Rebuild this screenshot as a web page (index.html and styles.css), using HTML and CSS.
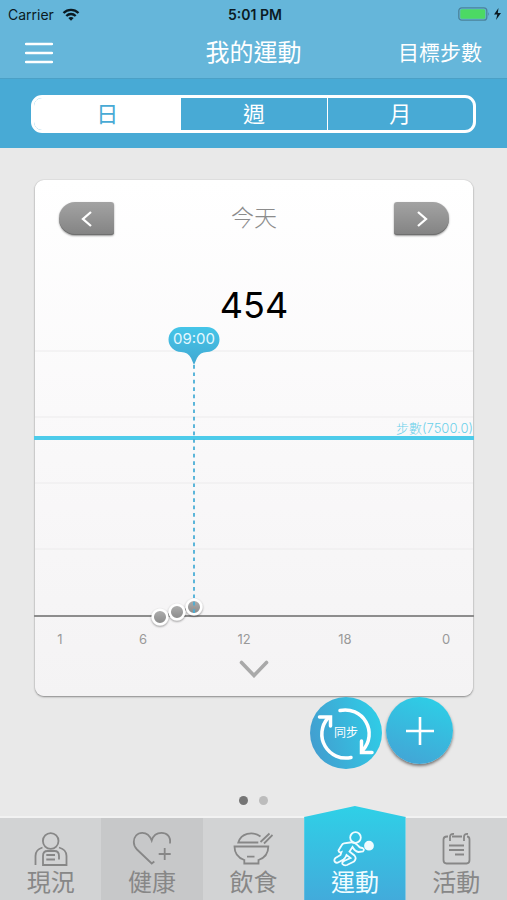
FILE: index.html
```html
<!DOCTYPE html>
<html lang="zh-Hant">
<head>
<meta charset="utf-8">
<meta name="viewport" content="width=device-width, initial-scale=1">
<title>我的運動</title>
<link rel="stylesheet" href="styles.css">
</head>
<body>
<div class="app">
  <header class="header">
    <div class="status">
      <div class="status-left">
        <span>Carrier</span>
        <svg class="wifi" viewBox="0 0 18 13" aria-hidden="true">
          <path d="M1.500 5C5.800 .8 12.200 .8 16.500 5M4.300 8C7 5.300 11 5.300 13.700 8" fill="none" stroke="#0b1a22" stroke-width="2.300"/>
          <path d="M6.300 10 9 12.800 11.700 10Q9 8 6.300 10Z" fill="#0b1a22"/>
        </svg>
      </div>
      <strong class="clock">5:01 PM</strong>
      <div class="status-right">
        <svg class="battery" viewBox="0 0 44 14" aria-hidden="true">
          <rect x=".8" y=".8" width="28" height="12.400" rx="3" fill="none" stroke="#4b839b" stroke-width="1.300"/>
          <rect x="2.300" y="2.300" width="25" height="9.400" rx="1.500" fill="#4cd964"/>
          <path d="M30.300 5Q32 7 30.300 9Z" fill="#4b839b"/>
          <path d="M40.500 1 36 7.600H39.300L38 13 43 6H39.800Z" fill="#0b1a22"/>
        </svg>
      </div>
    </div>
    <nav class="navbar">
      <button class="menu" type="button" aria-label="選單">
        <svg viewBox="0 0 28 22" aria-hidden="true"><path d="M1 2H27M1 11H27M1 20H27" stroke="#fff" stroke-width="2.400" stroke-linecap="round"/></svg>
      </button>
      <h1 class="title">我的運動</h1>
      <a class="goal-link" href="#goal">目標步數</a>
    </nav>
  </header>
  <div class="range-bar">
    <div class="range">
      <button class="range-item is-on" type="button" aria-pressed="true">日</button>
      <button class="range-item" type="button" aria-pressed="false">週</button>
      <button class="range-item" type="button" aria-pressed="false">月</button>
    </div>
  </div>

  <main class="main">
    <section class="card">
      <div class="card-head">
        <button class="step step-prev" type="button" aria-label="前一天"><svg viewBox="0 0 12 18" aria-hidden="true"><path d="M10 2 2 9 10 16"/></svg></button>
        <h2 class="day">今天</h2>
        <button class="step step-next" type="button" aria-label="後一天"><svg viewBox="0 0 12 18" aria-hidden="true"><path d="M2 2 10 9 2 16"/></svg></button>
      </div>
      <p class="count">454</p>
      <svg class="chart" viewBox="0 0 438 323" role="img" aria-label="每小時步數">
        <defs>
          <linearGradient id="pin" x1="0" y1="0" x2="0" y2="1"><stop offset="0" stop-color="#45c5e8"/><stop offset="1" stop-color="#42a8d2"/></linearGradient>
          <linearGradient id="dot" x1="0" y1="0" x2="0" y2="1"><stop offset="0" stop-color="#b0b0b0"/><stop offset="1" stop-color="#888"/></linearGradient>
          <filter id="soft" x="-50%" y="-50%" width="200%" height="200%"><feDropShadow dx="0" dy="1" stdDeviation="1" flood-opacity=".45"/></filter>
        </defs>
        <path d="M0 24H438M0 90H438M0 156H438M0 222H438" stroke="#ecebec" stroke-width="1"/>
        <path d="M-1 289H439" stroke="#8d8d8d" stroke-width="2"/>
        <path d="M-1 111H439" stroke="#4dcbea" stroke-width="4"/>
        <text class="goal-text" x="438" y="106" text-anchor="end">步數(7500.0)</text>
        <path d="M125 290 142 285 159 280" fill="none" stroke="#777" stroke-width="2"/>
        <g fill="url(#dot)" stroke="#fff" stroke-width="2.500" filter="url(#soft)">
          <circle cx="125" cy="290" r="7.300"/><circle cx="142" cy="285" r="7.300"/><circle cx="159" cy="280" r="7.300"/>
        </g>
        <path d="M159 38V289" stroke="#4aaed6" stroke-width="1.800" stroke-dasharray="3.700 3.700"/>
        <path d="M146 0H172A12.500 12.500 0 0 1 172 25Q165 25 162 31L159 38 156 31Q153 25 146 25A12.500 12.500 0 0 1 146 0Z" fill="url(#pin)"/>
        <text class="pin-text" x="159" y="17" text-anchor="middle">09:00</text>
        <g class="axis-text" text-anchor="middle">
          <text x="25" y="317">1</text><text x="108" y="317">6</text><text x="209" y="317">12</text><text x="310" y="317">18</text><text x="411" y="317">0</text>
        </g>
      </svg>
      <button class="expand" type="button" aria-label="展開">
        <svg viewBox="0 0 30 18" aria-hidden="true"><path d="M2.500 2.500 15 15.500 27.500 2.500" fill="none" stroke="#a9a9a9" stroke-width="3.600" stroke-linecap="round"/></svg>
      </button>
    </section>

    <div class="actions">
      <button class="sync" type="button">
        <svg class="sync-ring" viewBox="0 0 72 72" aria-hidden="true">
          <g fill="none" stroke="#fff" stroke-width="3.500" stroke-linecap="round" stroke-linejoin="miter">
            <path d="M30 13.500A24 24 0 0 1 53 53"/>
            <path d="M51.500 44V55.500H62"/>
            <path d="M41 60.500A24 24 0 0 1 18 21"/>
            <path d="M9.500 20H20.500V29"/>
          </g>
        </svg>
        <span class="sync-text">同步</span>
      </button>
      <button class="add" type="button" aria-label="新增">
        <svg viewBox="0 0 30 30" aria-hidden="true"><path d="M15 1V29M1 15H29" stroke="#fff" stroke-width="2.600"/></svg>
      </button>
    </div>

    <div class="pages" aria-hidden="true"><span class="page is-on"></span><span class="page"></span></div>
  </main>

  <nav class="tabs">
    <a class="tab" href="#status">
      <svg viewBox="0 0 36 36" aria-hidden="true"><circle cx="17.700" cy="10" r="7.800"/><path d="M2.500 34V25Q2.500 18.500 9.500 16.500M26 16.500Q33.500 18.500 33.500 25V34H10V25Q10 20 14.500 20H21.500Q26 20 26 25V28.500M13.300 24H22M13.300 28.500H22"/></svg>
      <span>現況</span>
    </a>
    <a class="tab tab-dark" href="#health">
      <svg viewBox="0 0 42 36" aria-hidden="true"><path d="M39 12.500C40 5 35.500 1.800 30.500 1.800 25.500 1.800 22 5 20.700 9.500 19 5 16 1.800 11.300 1.800 6 1.800 2.800 6 2.800 11 2.800 14 4 16.500 6 18.500L20.700 32.500 23.300 30.500M33.700 17V29M27.700 23H39.700"/></svg>
      <span>健康</span>
    </a>
    <a class="tab" href="#diet">
      <svg viewBox="0 0 40 36" aria-hidden="true"><path d="M1.500 15.500H35.300C35.300 23 31.500 27 25.500 29V32.500H11.300V29C5.500 27 1.500 23 1.500 15.500ZM14 25.700H21.500M25.300 11.500H5.300C8 2.500 19 -.5 27.500 5.500M27.500 11 36.500 2.500M31 12.500 39.500 4"/></svg>
      <span>飲食</span>
    </a>
    <a class="tab is-active" href="#sport" aria-current="page">
      <svg viewBox="0 0 45 36" aria-hidden="true"><circle cx="23.500" cy="6.500" r="5.300"/><circle class="ball" cx="37" cy="14.700" r="4"/><path d="M18 11.500 12 12.300Q10.500 12.500 9.500 14.500L6.500 19.500Q7 22 9.500 21L8.500 24 3.500 27Q1.500 29 3 31 4.500 32.500 7 31L11.500 28.500Q13.500 27 14.500 24L18.500 27 13 29.500Q9.500 31 10.500 33 12 35 15 34L22 30.500Q25 27.500 22.500 24.500L17.500 20.500 20.500 16Q23 20.500 26.500 21L31 20.300Q33 18.500 30.500 17 27.500 17 26 14.500 23 11 18 11.500Z"/></svg>
      <span>運動</span>
    </a>
    <a class="tab" href="#activity">
      <svg viewBox="0 0 36 36" aria-hidden="true"><path d="M14 5.500H24M29 5.500Q31.500 5.500 31.500 8.500V29Q31.500 32.500 28.500 32.500H8.500Q5.500 32.500 5.500 29V8.500Q5.500 5.500 9 5.500H10M12 10V6Q12 2.500 16 3M26 10V6Q26 2.500 30 3M11 14.500H26M11 19H26M17 23.500H26"/></svg>
      <span>活動</span>
    </a>
  </nav>
</div>
</body>
</html>
```
FILE: styles.css
```css
* { box-sizing: border-box; }

body {
  margin: 0;
  background: #e9e9e9;
  font-family: Inter, "Noto Sans CJK TC", sans-serif;
}

button {
  margin: 0;
  padding: 0;
  border: 0;
  background: none;
  color: inherit;
  font: inherit;
}

a { color: inherit; text-decoration: none; }
svg { display: block; }
h1, h2, p { margin: 0; font-weight: 300; }

.app {
  display: flex;
  flex-direction: column;
  min-height: 100vh;
}

/* Header */
.header {
  background: #65b6da;
  color: #fff;
  border-bottom: 1px solid #4ba0c6;
}

.status {
  display: grid;
  grid-template-columns: 1fr auto 1fr;
  align-items: center;
  height: 28px;
  padding: 0 5px 0 8px;
  color: #0b1a22;
  font-size: 14px;
}

.status-left { display: flex; align-items: center; gap: 8px; }
.status-right { display: flex; justify-content: flex-end; }
.wifi { width: 18px; height: 13px; }
.battery { width: 44px; height: 14px; }
.clock { font-weight: 600; }

.navbar {
  display: grid;
  grid-template-columns: 1fr auto 1fr;
  align-items: center;
  height: 50px;
  padding: 0 25px;
}

.menu { justify-self: start; }
.menu svg { width: 28px; height: 22px; }
.title { font-size: 24px; line-height: 48px; font-weight: 400; }
.goal-link { justify-self: end; font-size: 21px; line-height: 48px; }

.range-bar {
  padding: 16px 31px 15px;
  background: #48aad5;
}

.range {
  display: grid;
  grid-template-columns: repeat(3, 1fr);
  height: 38px;
  border: 3px solid #fff;
  border-radius: 11px;
  overflow: hidden;
  color: #fff;
}

.range-item { font-size: 22px; line-height: 32px; }
.range-item + .range-item { border-left: 1px solid #fff; }
.range-item.is-on { background: #fff; color: #48aad5; }

/* Card */
.main { flex: 1; }

.card {
  margin: 32px 34px 0 35px;
  border-radius: 9px;
  background: linear-gradient(#fff, #faf9fa 45%, #f4f3f4);
  box-shadow: 0 1px 2px #888, 0 0 1px #aaa;
}

.card-head {
  display: flex;
  justify-content: space-between;
  align-items: center;
  padding: 22px 24px 0;
}

.step {
  display: grid;
  place-items: center;
  width: 55px;
  height: 33px;
  background: linear-gradient(#a3a3a3, #838383);
  box-shadow: inset 0 -1px #6f6f6f, 0 1px 2px #999;
}

.step-prev { border-radius: 16px 3px 3px 16px; }
.step-next { border-radius: 3px 16px 16px 3px; }
.step svg { width: 12px; height: 18px; fill: none; stroke: #fff; stroke-width: 2.3; }
.day { color: #8c8c8c; font-size: 23px; line-height: 33px; }

.count {
  margin-top: 48px;
  color: #000;
  font-size: 36px;
  line-height: 44px;
  font-weight: 400;
  text-align: center;
}

.chart { width: 100%; height: auto; overflow: visible; }
.goal-text { fill: #6bd0ea; font-size: 13px; font-weight: 300; }
.pin-text { fill: #e4f8ff; font-size: 15px; }
.axis-text { fill: #999; font-size: 13px; }

.expand { display: block; margin: 0 auto; padding: 10px 0 18px; }
.expand svg { width: 30px; height: 18px; }

/* Floating actions */
.actions {
  display: flex;
  justify-content: flex-end;
  align-items: flex-start;
  gap: 4px;
  padding: 1px 54px 0;
}

.sync {
  display: grid;
  place-items: center;
  width: 72px;
  height: 72px;
  border-radius: 50%;
  background: linear-gradient(75deg, #429fd0 10%, #30cbe6 90%);
  color: #fff;
}

.sync > * { grid-area: 1 / 1; }
.sync-ring { width: 72px; height: 72px; }
.sync-text { font-size: 12px; line-height: 16px; }

.add {
  display: grid;
  place-items: center;
  width: 67px;
  height: 67px;
  border-radius: 50%;
  background: linear-gradient(200deg, #2ecde6 10%, #42a6d6 90%);
  box-shadow: 0 2px 3px #777;
}

.add svg { width: 30px; height: 30px; }

.pages {
  display: flex;
  justify-content: center;
  gap: 11px;
  padding-top: 27px;
}

.page { width: 9px; height: 9px; border-radius: 50%; background: #bcbcbc; }
.page.is-on { background: #757575; }

/* Tab bar */
.tabs {
  display: grid;
  grid-template-columns: repeat(5, 1fr);
  align-items: end;
}

.tab {
  display: flex;
  flex-direction: column;
  align-items: center;
  gap: 2px;
  height: 84px;
  padding-top: 13px;
  border-top: 2px solid #f2f2f2;
  background: #d2d3d4;
  color: #878787;
  font-size: 24px;
  line-height: 28px;
}

.tab svg { height: 36px; fill: none; stroke: currentColor; stroke-width: 1.8; }
.tab-dark { background: #c7c8c9; }

.tab.is-active {
  height: 94px;
  padding-top: 25px;
  border: 0;
  background: linear-gradient(#2fd0e7, #42abdb);
  clip-path: polygon(50% 0, 100% 11px, 100% 100%, 0 100%, 0 11px);
  color: #f0fcff;
}

.ball { fill: currentColor; }
```
